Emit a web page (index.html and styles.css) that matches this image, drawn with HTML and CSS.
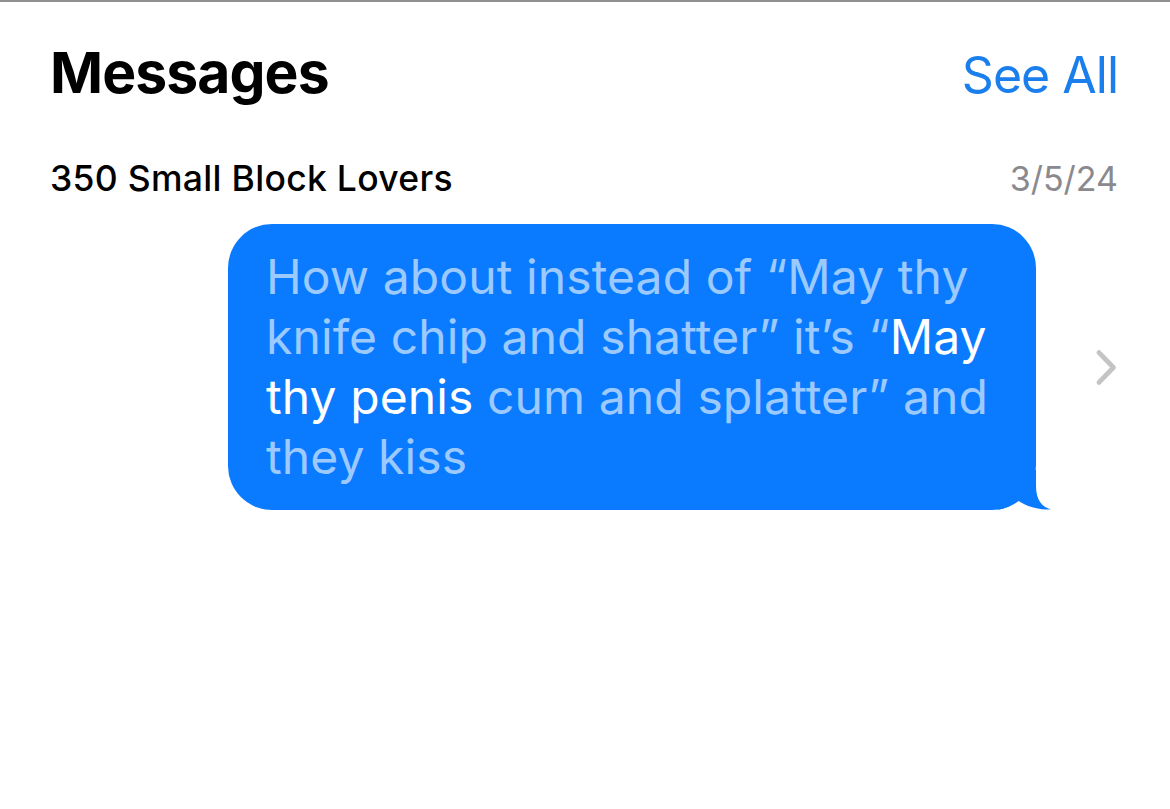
FILE: index.html
```html
<!DOCTYPE html>
<html lang="en">
<head>
<meta charset="utf-8">
<title>Messages</title>
<link rel="stylesheet" href="styles.css">
</head>
<body>
  <main class="panel">
    <header class="panel-head">
      <h1 class="panel-title">Messages</h1>
      <a class="see-all" href="#">See All</a>
    </header>

    <div class="conv-meta">
      <span class="conv-name">350 Small Block Lovers</span>
      <span class="conv-date">3/5/24</span>
    </div>

    <div class="conv-row">
      <div class="bubble">
        <p class="bubble-text">How about instead of “May thy<br>knife chip and shatter” it’s “<span class="hl">May<br>thy penis</span> cum and splatter” and<br>they kiss</p>
        <svg class="bubble-tail" width="56" height="40" viewBox="0 0 56 40" aria-hidden="true">
          <path d="M0 0 H38 V16 C38 30 44 37 53 39.5 C42 40 29 37 19 30 C13 35 7 39.5 0 39.5 Z" fill="#0a7bff"/>
        </svg>
      </div>
      <svg class="chevron" width="23" height="37" viewBox="0 0 23 37" aria-hidden="true">
        <path d="M4 3.5 L18.5 18.5 L4 33.5" fill="none" stroke="#c4c4c7" stroke-width="4.8" stroke-linecap="round" stroke-linejoin="round"/>
      </svg>
    </div>
  </main>
</body>
</html>
```

FILE: styles.css
```css
html, body {
  margin: 0;
  padding: 0;
  background: #ffffff;
}

body {
  font-family: Inter, "Noto Sans", "Liberation Sans", sans-serif;
  color: #000;
  border-top: 2px solid #8f8f8f;
  height: 807px;
  overflow: hidden;
}

.panel {
  padding: 0 52px 0 50px;
}

.panel-head {
  display: flex;
  justify-content: space-between;
  align-items: baseline;
  height: 110px;
}

.panel-title {
  margin: 0;
  font-size: 57px;
  font-weight: 700;
  letter-spacing: -0.9px;
  line-height: 142px;
  height: 110px;
}

.see-all {
  color: #1a7fec;
  text-decoration: none;
  font-size: 50px;
  font-weight: 400;
  letter-spacing: -1px;
  line-height: 142px;
}

.conv-meta {
  display: flex;
  justify-content: space-between;
  align-items: baseline;
  height: 112px;
}

.conv-name {
  font-size: 35.5px;
  font-weight: 500;
  letter-spacing: 0.3px;
  line-height: 134px;
}

.conv-date {
  font-size: 34px;
  color: #8a8a8e;
  line-height: 134px;
}

.conv-row {
  display: flex;
  align-items: center;
  padding-left: 178px;
}

.bubble {
  position: relative;
  width: 810px;
  box-sizing: border-box;
  padding: 23px 20px 23px 38px;
  background: #0a7bff;
  border-radius: 44px;
}

.bubble-text {
  margin: 0;
  font-size: 48px;
  letter-spacing: 0.1px;
  line-height: 60px;
  color: #9ccaff;
  white-space: nowrap;
}

.hl {
  color: #ffffff;
}

.bubble-tail {
  position: absolute;
  right: -18px;
  bottom: 0;
  display: block;
}

.chevron {
  margin-left: 59px;
  display: block;
}
```
